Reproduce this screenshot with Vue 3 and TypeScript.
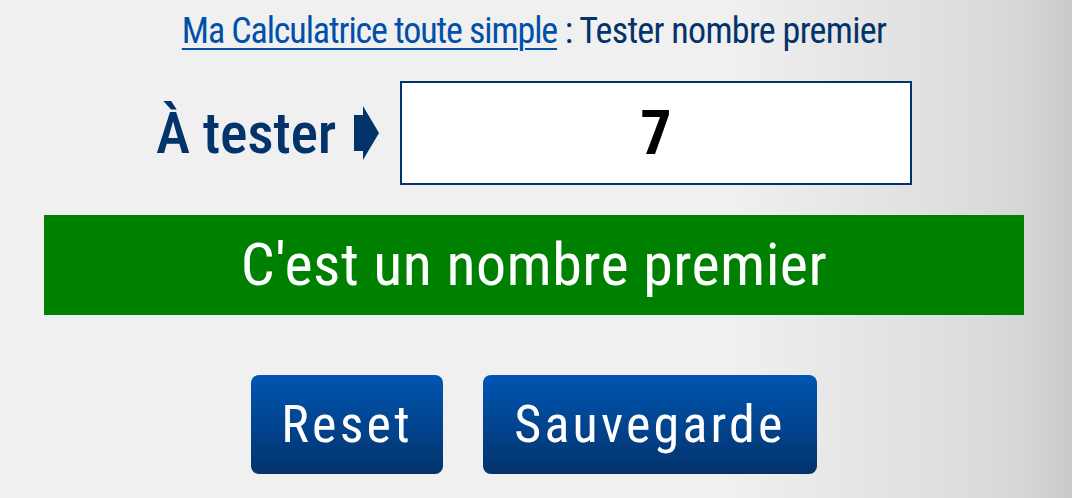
<script setup lang="ts">
const value: string = '7'
</script>

<template>
  <main class="page">
    <h1 class="title"><a class="link" href="#">Ma Calculatrice toute simple</a> : Tester nombre premier</h1>
    <div class="row">
      <label class="label">À tester</label>
      <svg class="arrow" width="25" height="54" viewBox="0 0 25 54"><path d="M0 9H9V0L25 27L9 54V45H0Z" fill="#03336b" /></svg>
      <div class="field">{{ value }}</div>
    </div>
    <div class="result">C'est un nombre premier</div>
    <div class="actions">
      <button class="btn reset">Reset</button>
      <button class="btn save">Sauvegarde</button>
    </div>
  </main>
</template>

<style>
html, body { margin: 0; padding: 0; }
</style>

<style scoped>
.page {
  box-sizing: border-box;
  width: 1072px;
  height: 498px;
  overflow: hidden;
  padding: 0 48px 0 44px;
  background: linear-gradient(to right, #f0f0f0 0%, #f0f0f0 68%, #dcdcdc 91%, #d5d5d5 96%, #cacaca 100%);
  font-family: Roboto, "Liberation Sans", sans-serif;
  font-stretch: 75%;
  display: flex;
  flex-direction: column;
  align-items: center;
}
.title {
  margin: 12px 0 0;
  height: 38px;
  line-height: 38px;
  font-size: 36px;
  font-weight: 400;
  color: #03336b;
  white-space: nowrap;
  letter-spacing: -0.7px;
}
.link {
  color: #0050aa;
  letter-spacing: -1.1px;
  text-decoration: underline;
  text-underline-offset: 5px;
  text-decoration-thickness: 2px;
}
.row {
  margin-top: 31px;
  display: flex;
  align-items: center;
  align-self: flex-start;
  margin-left: 112px;
}
.label {
  font-size: 58px;
  font-weight: 500;
  color: #03336b;
  letter-spacing: -0.3px;
  white-space: nowrap;
  width: 198px;
}
.arrow { margin-right: 21px; }
.field {
  box-sizing: border-box;
  width: 512px;
  height: 104px;
  border: 2px solid #03336b;
  background: #fff;
  color: #000;
  text-align: center;
  line-height: 100px;
  font-size: 62px;
  font-weight: 700;
}
.result {
  margin-top: 30px;
  width: 980px;
  height: 100px;
  line-height: 100px;
  background: #008000;
  color: #fff;
  text-align: center;
  font-size: 60px;
  letter-spacing: 0.45px;
  white-space: nowrap;
}
.actions {
  margin-top: 60px;
  display: flex;
  gap: 40px;
}
.btn {
  height: 99px;
  border: 0;
  border-radius: 8px;
  padding: 0;
  background: linear-gradient(to bottom, #0056b3, #03336b 100%);
  color: #fff;
  font-family: inherit;
  font-stretch: inherit;
  font-size: 52px;
  letter-spacing: 3.2px;
}
.reset { width: 192px; }
.save { width: 334px; }
</style>
